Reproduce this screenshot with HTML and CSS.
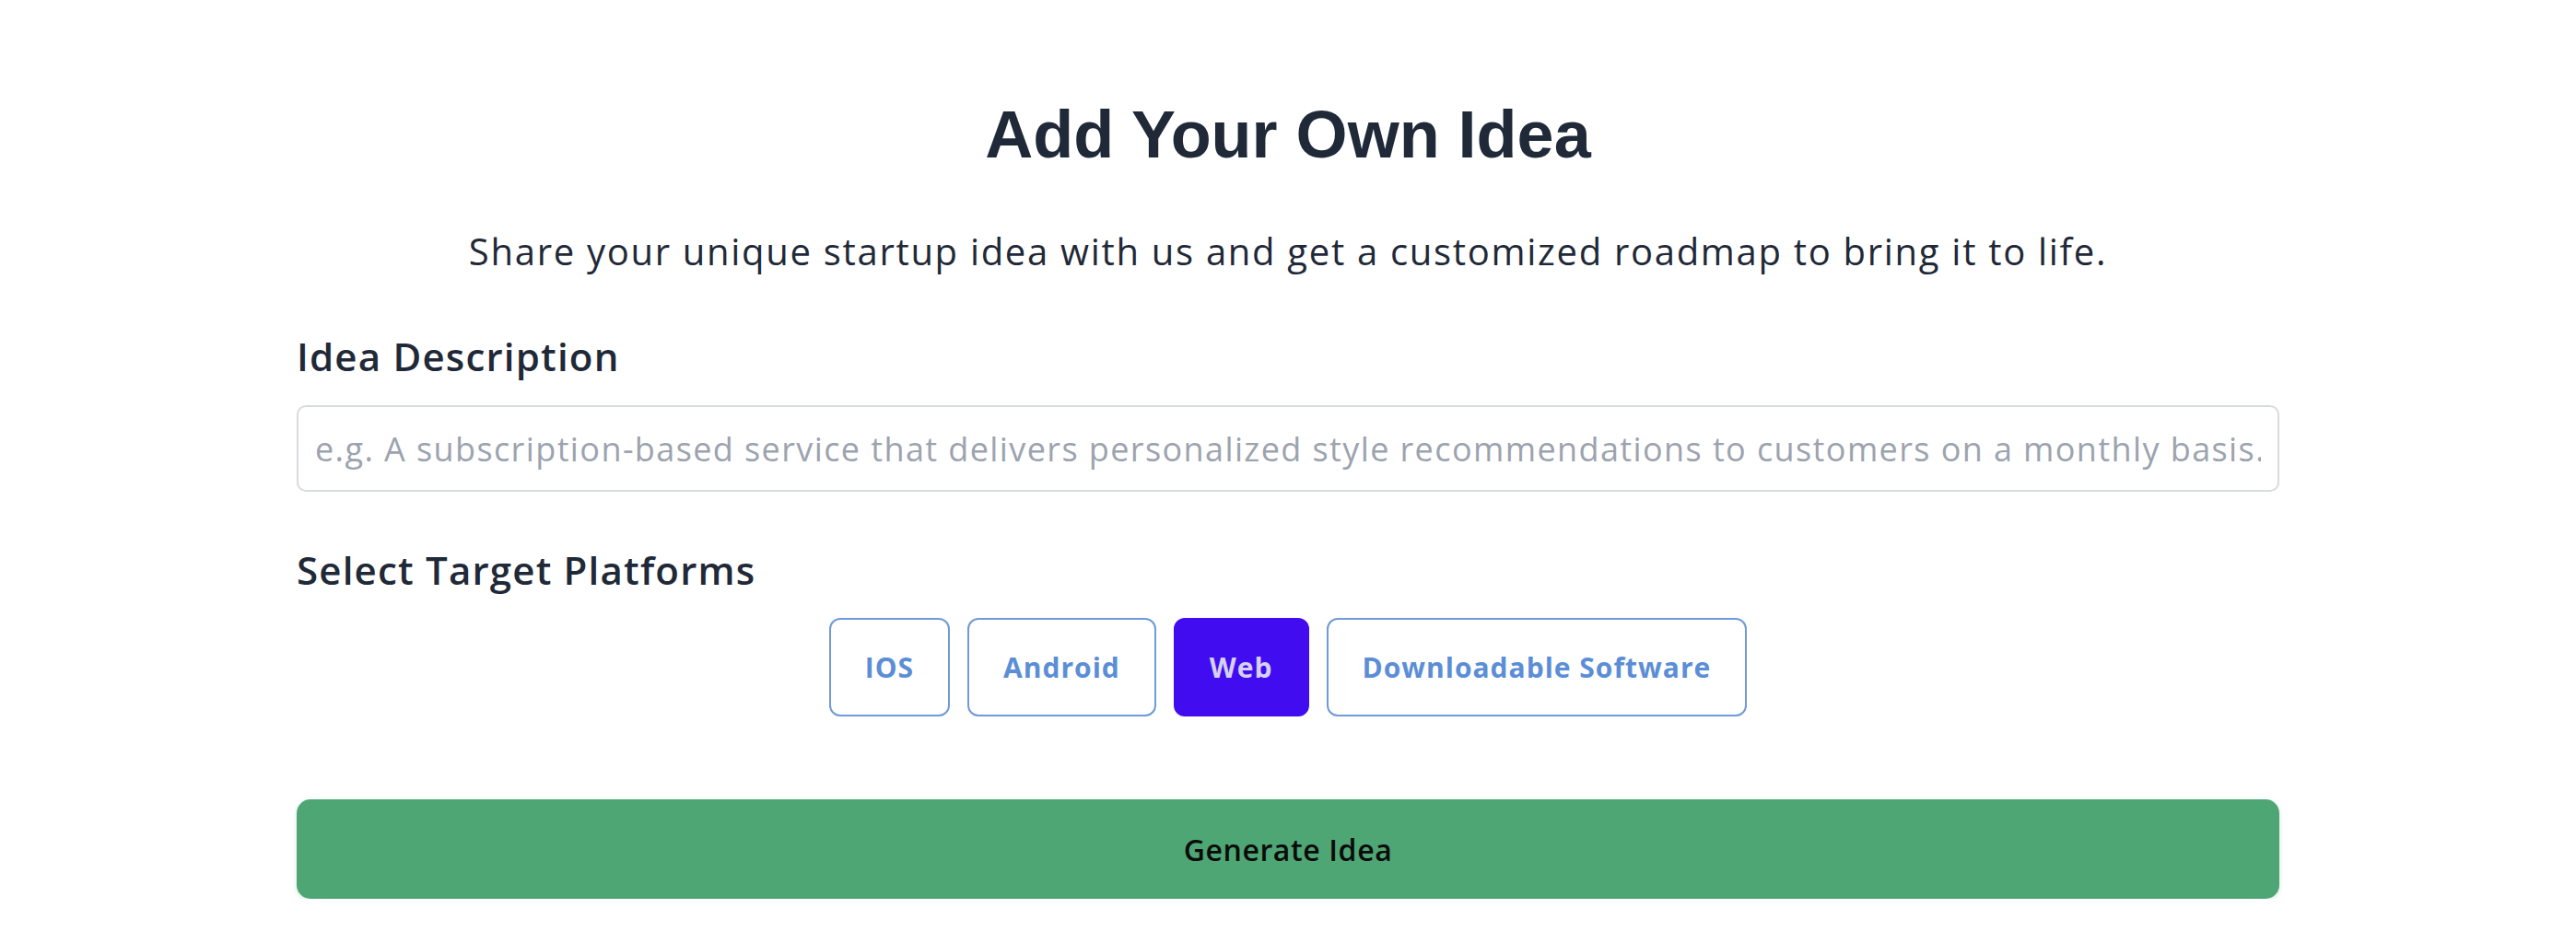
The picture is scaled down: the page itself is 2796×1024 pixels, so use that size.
FILE: index.html
```html
<!DOCTYPE html>
<html lang="en">
<head>
<meta charset="utf-8">
<title>Add Your Own Idea</title>
<link rel="stylesheet" href="styles.css">
</head>
<body>
<main class="page">
  <h1 class="title">Add Your Own Idea</h1>
  <p class="subtitle">Share your unique startup idea with us and get a customized roadmap to bring it to life.</p>
  <form class="form">
    <label class="label label-desc" for="idea">Idea Description</label>
    <input class="input" id="idea" type="text" placeholder="e.g. A subscription-based service that delivers personalized style recommendations to customers on a monthly basis.">
    <h2 class="label label-platforms">Select Target Platforms</h2>
    <div class="platforms">
      <button type="button" class="chip">IOS</button>
      <button type="button" class="chip">Android</button>
      <button type="button" class="chip chip-active">Web</button>
      <button type="button" class="chip">Downloadable Software</button>
    </div>
    <button type="button" class="generate">Generate Idea</button>
  </form>
</main>
</body>
</html>
```

FILE: styles.css
```css
html, body {
  margin: 0;
  padding: 0;
  background: #ffffff;
}

body {
  font-family: "Open Sans", "Liberation Sans", sans-serif;
  color: #1f2937;
}

.page {
  width: 2152px;
  margin: 0 auto;
  padding-top: 110px;
  display: flex;
  flex-direction: column;
}

.title {
  margin: 0;
  font-family: "Liberation Sans", Arial, sans-serif;
  font-weight: 700;
  font-size: 72px;
  line-height: 72px;
  text-align: center;
  color: #1f2937;
}

.subtitle {
  margin: 68px 0 0;
  font-size: 40px;
  line-height: 46px;
  text-align: center;
  color: #1f2937;
  letter-spacing: 1.7px;
}

.form {
  display: flex;
  flex-direction: column;
}

.label {
  display: block;
  margin: 0;
  font-size: 42px;
  line-height: 50px;
  font-weight: 600;
  color: #1f2937;
  letter-spacing: 1.2px;
}

.label-desc {
  margin-top: 66px;
}

.input {
  margin-top: 28px;
  box-sizing: border-box;
  width: 100%;
  height: 94px;
  border: 2px solid #d8dbe0;
  border-radius: 10px;
  padding: 0 18px;
  font-family: "Open Sans", sans-serif;
  font-size: 36px;
  letter-spacing: 1.4px;
  color: #1f2937;
  outline: none;
}

.input::placeholder {
  color: #9ca3af;
}

.label-platforms {
  margin-top: 60px;
}

.platforms {
  margin-top: 27px;
  display: flex;
  justify-content: center;
  gap: 19px;
}

.chip {
  box-sizing: border-box;
  height: 107px;
  padding: 0 37px;
  background: #ffffff;
  border: 2px solid #6f9bd8;
  border-radius: 12px;
  font-family: "Open Sans", sans-serif;
  font-size: 30px;
  font-weight: 700;
  letter-spacing: 1px;
  color: #5b8ed6;
  cursor: pointer;
}

.chip-active {
  background: #410cf0;
  border-color: #410cf0;
  color: #d5d1fa;
}

.generate {
  margin-top: 90px;
  box-sizing: border-box;
  width: 100%;
  height: 108px;
  border: none;
  border-radius: 15px;
  background: #4ea674;
  box-shadow: 0 2px 5px rgba(78, 166, 116, 0.25);
  font-family: "Open Sans", sans-serif;
  font-size: 32px;
  font-weight: 600;
  letter-spacing: 0.6px;
  color: #0b0b0b;
  cursor: pointer;
}
```
